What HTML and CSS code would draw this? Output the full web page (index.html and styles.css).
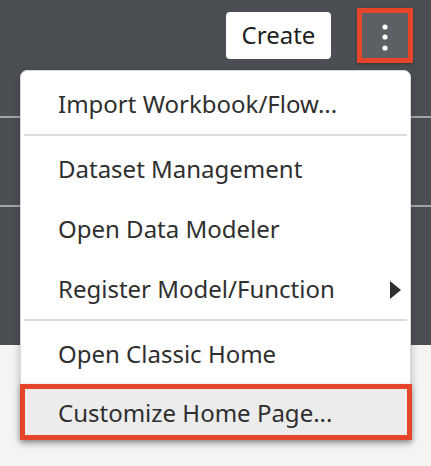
FILE: index.html
```html
<!DOCTYPE html>
<html>
<head>
<meta charset="utf-8">
<link rel="stylesheet" href="styles.css">
</head>
<body>
<div class="page">
  <div class="dark">
    <div class="topbar">
      <button class="create">Create</button>
      <button class="kebab" aria-label="More">
        <svg width="8" height="28" viewBox="0 0 8 28"><circle cx="4" cy="4" r="2.6" fill="#fff"/><circle cx="4" cy="14" r="2.6" fill="#fff"/><circle cx="4" cy="25" r="2.6" fill="#fff"/></svg>
      </button>
    </div>
    <div class="row row1"></div>
    <div class="row row2"></div>
  </div>
  <div class="light"></div>

  <div class="menu">
    <div class="item">Import Workbook/Flow...</div>
    <div class="sep"></div>
    <div class="item">Dataset Management</div>
    <div class="item">Open Data Modeler</div>
    <div class="item sub">Register Model/Function<span class="tri"></span></div>
    <div class="sep"></div>
    <div class="item">Open Classic Home</div>
    <div class="item hl">Customize Home Page...</div>
  </div>
</div>
</body>
</html>
```
FILE: styles.css
```css
* { box-sizing: border-box; }
html, body { margin: 0; padding: 0; }
body { width: 431px; height: 466px; overflow: hidden; background: #f5f4f3; font-family: "Noto Sans", "Open Sans", sans-serif; }
.page { position: relative; width: 431px; height: 466px; }
.dark { background: #4b4f54; height: 345px; }
.topbar { display: flex; justify-content: flex-end; align-items: flex-start; height: 116px; padding: 8px 18px 0 0; }
.create {
  margin-top: 4px; margin-right: 26px;
  width: 105px; height: 47px; border: none; border-radius: 4px; background: #fff;
  font-family: "Noto Sans", "Open Sans", sans-serif; font-size: 24px; color: #1f1f1f; padding: 0 0 2px 0;
}
.kebab {
  width: 56px; height: 55px; border: 5px solid #e5452b; background: #5c6065;
  display: flex; align-items: center; justify-content: center; padding: 0; margin-right: 0;
  box-shadow: 0 1px 3px rgba(0,0,0,0.35);
}
.kebab svg { display: block; margin-top: 2px; }
.row { border-top: 2px solid #a3a5a8; }
.row1 { height: 89px; }
.row2 { height: 140px; }
.menu {
  position: absolute; left: 20px; top: 70px; width: 391px;
  background: #fff; border: 1px solid #d9d9d9; border-radius: 7px 7px 0 0;
  padding-top: 2px;
  box-shadow: 0 3px 8px rgba(0,0,0,0.25);
}
.item {
  height: 60px; display: flex; align-items: center; padding-left: 37px;
  font-size: 24px; color: #2f2f2f; position: relative; letter-spacing: 0;
}
.sep { height: 2px; background: #dcdcdc; margin: 1px 3px 2px 3px; }
.tri {
  position: absolute; right: 9px; top: 23px; width: 0; height: 0;
  border-top: 9px solid transparent; border-bottom: 9px solid transparent; border-left: 11px solid #2d2d2d;
}
.hl {
  margin: 1px -2px -1px -1px; height: 56px; padding-left: 33px;
  background: #ececec; border: 5px solid #e5452b;
  box-shadow: 0 2px 5px rgba(0,0,0,0.3);
}
```
